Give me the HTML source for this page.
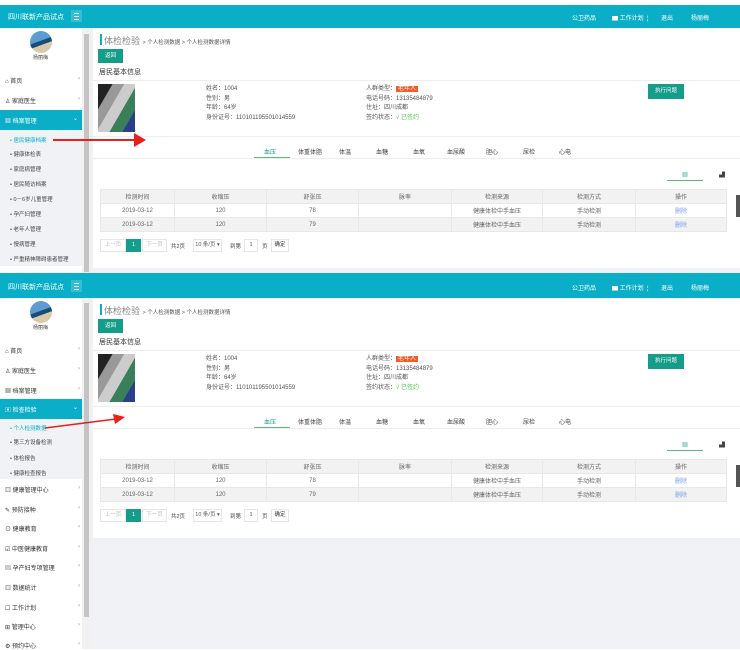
<!DOCTYPE html>
<html><head><meta charset="utf-8">
<style>
*{margin:0;padding:0;box-sizing:border-box}
body{width:740px;height:649px;overflow:hidden;background:#fff;font-family:"Liberation Sans","Noto Sans CJK SC",sans-serif;font-size:7px;color:#444;position:relative}
.a{position:absolute;white-space:nowrap}
.hd{position:absolute;left:0;width:740px;height:23px;background:#0aafc7}
.hd .t{position:absolute;left:8px;top:7px;color:#fff;font-size:7px}
.hd .m{position:absolute;left:71px;top:5px;width:11px;height:12px;background:#2fc0d4}
.hd .m i{position:absolute;left:3px;width:5px;height:1px;background:#fff}
.hd .r{position:absolute;top:8px;color:#fff;font-size:6px}
.sb{position:absolute;left:0;width:82px;background:#fff}
.sbar{position:absolute;left:82px;width:11px;background:#f1f1f1}
.thumb{position:absolute;left:84px;width:5px;background:#c4c4c4}
.mi{position:absolute;left:5px;font-size:6px;color:#333;width:75px}
.mi b{position:absolute;right:0;font-weight:normal;color:#999}
.sub{position:absolute;left:0;width:82px;background:#f0f2f6}
.si{position:absolute;left:10px;font-size:5.5px;color:#444}
.act{position:absolute;left:0;width:82px;height:20px;background:#0aafc7;color:#fff}
.cp{position:absolute;left:93px;width:647px;background:#fff}
.ln{position:absolute;left:93px;width:647px;height:1px;background:#eee}
.btn{position:absolute;background:#159d89;color:#fff;font-size:5.5px;text-align:center}
.tb{position:absolute;left:100px;width:627px;border-collapse:collapse;font-size:6px;color:#666}
.tb td{border:1px solid #e8e8e8;height:14px;text-align:center}
.pg{position:absolute;height:13px;border:1px solid #e6e6e6;font-size:5.5px;color:#bbb;text-align:center;line-height:11px;background:#fff}
.av{position:absolute;left:30px;width:22px;height:22px;border-radius:50%;background:linear-gradient(160deg,#5d9bd0 0 45%,#1a4c7a 46% 60%,#d8c9a8 61%)}
.ph{position:absolute;left:98px;width:37px;height:48px;background:linear-gradient(120deg,#222 0 22%,#999 23% 40%,#ccc 41% 60%,#3a7f5a 61% 80%,#2a3f8a 81%)}
</style></head><body>

<div class="hd" style="top:5px"><div class="t">四川联新产品试点</div><div class="m"><i style="top:3px"></i><i style="top:6px"></i><i style="top:9px"></i></div>
<div class="r" style="left:572px">公卫药品</div><div class="r" style="left:612px">▆ 工作计划 &nbsp;¦</div><div class="r" style="left:661px">退出</div><div class="r" style="left:691px">杨丽梅</div></div>
<div class="sb" style="top:28px;height:246px"></div>
<div class="sbar" style="top:28px;height:246px"></div><div class="thumb" style="top:34px;height:238px"></div>
<div class="av" style="top:31px"></div><div class="a" style="left:33px;top:54px;font-size:5px">杨丽梅</div>
<div class="mi" style="top:76px">⌂ 首页<b>›</b></div>
<div class="mi" style="top:96px">♙ 家庭医生<b>›</b></div>
<div class="act" style="top:110px"><div class="a" style="left:5px;top:6px;font-size:6px">▦ 档案管理</div><div class="a" style="left:73px;top:5px;font-size:6px">⌄</div></div>
<div class="sub" style="top:130px;height:136px"></div>
<div class="si" style="top:136px;color:#0aafc7">• 居民健康档案</div>
<div class="si" style="top:150px">• 健康体检表</div>
<div class="si" style="top:165px">• 家庭病管理</div>
<div class="si" style="top:180px">• 居民随访档案</div>
<div class="si" style="top:195px">• 0－6岁儿童管理</div>
<div class="si" style="top:210px">• 孕产妇管理</div>
<div class="si" style="top:225px">• 老年人管理</div>
<div class="si" style="top:240px">• 慢病管理</div>
<div class="si" style="top:255px">• 严重精神障碍患者管理</div>
<div class="cp" style="top:28px;height:240px"></div>
<div class="a" style="left:93px;top:268px;width:647px;height:6px;background:#f0f2f5"></div>
<div class="a" style="left:0;top:273px;width:740px;height:2px;background:#0aafc7"></div>

<div class="hd" style="top:275px"><div class="t">四川联新产品试点</div><div class="m"><i style="top:3px"></i><i style="top:6px"></i><i style="top:9px"></i></div>
<div class="r" style="left:572px">公卫药品</div><div class="r" style="left:612px">▆ 工作计划 &nbsp;¦</div><div class="r" style="left:661px">退出</div><div class="r" style="left:691px">杨丽梅</div></div>
<div class="sbar" style="top:298px;height:351px"></div><div class="thumb" style="top:303px;height:314px"></div>
<div class="av" style="top:301px"></div><div class="a" style="left:33px;top:324px;font-size:5px">杨丽梅</div>
<div class="mi" style="top:346px">⌂ 首页<b>›</b></div>
<div class="mi" style="top:366px">♙ 家庭医生<b>›</b></div>
<div class="mi" style="top:386px">▦ 档案管理<b>›</b></div>
<div class="act" style="top:399px"><div class="a" style="left:5px;top:6px;font-size:6px">▣ 检查检验</div><div class="a" style="left:73px;top:5px;font-size:6px">⌄</div></div>
<div class="sub" style="top:419px;height:60px"></div>
<div class="si" style="top:424px;color:#0aafc7">• 个人检测数据</div>
<div class="si" style="top:438px">• 第三方设备检测</div>
<div class="si" style="top:454px">• 体检报告</div>
<div class="si" style="top:469px">• 健康检查报告</div>
<div class="mi" style="top:485px">▥ 健康管理中心<b>›</b></div>
<div class="mi" style="top:505px">✎ 预防接种<b>›</b></div>
<div class="mi" style="top:524px">⊙ 健康教育<b>›</b></div>
<div class="mi" style="top:544px">☑ 中医健康教育<b>›</b></div>
<div class="mi" style="top:563px">▤ 孕产妇专项管理<b>›</b></div>
<div class="mi" style="top:583px">▥ 数据统计<b>›</b></div>
<div class="mi" style="top:603px">☐ 工作计划<b>›</b></div>
<div class="mi" style="top:622px">⊞ 管理中心<b>›</b></div>
<div class="mi" style="top:641px">⚙ 预约中心<b>›</b></div>
<div class="a" style="left:93px;top:298px;width:647px;height:351px;background:#f0f2f5"></div>
<div class="cp" style="top:298px;height:240px"></div>

<div style="position:absolute;left:0;top:0;width:740px;height:270px">
<div class="a" style="left:100px;top:34px;width:2px;height:11px;background:#0aafc7"></div>
<div class="a" style="left:104px;top:34px;font-size:9px;color:#888">体检检验 <span style="font-size:5.5px;color:#555">&gt; 个人检测数据 &gt; 个人检测数据详情</span></div>
<div class="btn" style="left:98px;top:49px;width:25px;height:14px;line-height:14px">返回</div>
<div class="a" style="left:99px;top:67px;font-size:7px;color:#333">居民基本信息</div>
<div class="ln" style="top:80px"></div>
<div class="ph" style="top:84px"></div>
<div class="a" style="left:206px;top:85px;font-size:6px;line-height:9.5px;color:#555">姓名：1004<br>性别：男<br>年龄：64岁<br>身份证号：110101195501014559</div>
<div class="a" style="left:366px;top:85px;font-size:6px;line-height:9.5px;color:#555">人群类型：<span style="background:#f25b2a;color:#fff;padding:0 2px">老年人</span><br>电话号码：13135484879<br>住址：四川成都<br>签约状态：<span style="color:#5cc85c">√ 已签约</span></div>
<div class="btn" style="left:648px;top:84px;width:36px;height:15px;line-height:15px">执行问题</div>
<div class="ln" style="top:136px"></div>
<div class="a" style="left:264px;top:147px;font-size:6px;color:#159d89">血压</div>
<div class="a" style="left:254px;top:157px;width:36px;height:1px;background:#5fb878"></div>
<div class="a" style="left:298px;top:147px;font-size:6px">体重体脂</div>
<div class="a" style="left:339px;top:147px;font-size:6px">体温</div>
<div class="a" style="left:376px;top:147px;font-size:6px">血糖</div>
<div class="a" style="left:413px;top:147px;font-size:6px">血氧</div>
<div class="a" style="left:447px;top:147px;font-size:6px">血尿酸</div>
<div class="a" style="left:486px;top:147px;font-size:6px">胆心</div>
<div class="a" style="left:523px;top:147px;font-size:6px">尿检</div>
<div class="a" style="left:559px;top:147px;font-size:6px">心电</div>
<div class="ln" style="top:158px"></div>
<div class="a" style="left:682px;top:170px;font-size:6px;color:#159d89">▦</div>
<div class="a" style="left:719px;top:170px;font-size:6px">▟</div>
<div class="a" style="left:667px;top:180px;width:36px;height:1px;background:#5fb878"></div>
<table class="tb" style="top:189px">
<tr style="background:#f2f2f2"><td style="width:74px">检测时间</td><td style="width:92px">收缩压</td><td style="width:92px">舒张压</td><td style="width:93px">脉率</td><td style="width:91px">检测来源</td><td style="width:93px">检测方式</td><td>操作</td></tr>
<tr><td>2019-03-12</td><td>120</td><td>78</td><td></td><td>健康体检中手血压</td><td>手动检测</td><td style="color:#7a9cf0">删除</td></tr>
<tr style="background:#f2f2f2"><td>2019-03-12</td><td>120</td><td>79</td><td></td><td>健康体检中手血压</td><td>手动检测</td><td style="color:#7a9cf0">删除</td></tr>
</table>
<div class="a" style="left:736px;top:195px;width:4px;height:22px;background:#555"></div>
<div class="pg" style="left:100px;top:239px;width:26px">上一页</div>
<div class="pg" style="left:126px;top:239px;width:15px;background:#159d89;color:#fff;border-color:#159d89">1</div>
<div class="pg" style="left:142px;top:239px;width:25px">下一页</div>
<div class="a" style="left:171px;top:242px;font-size:5.5px">共2页</div>
<div class="pg" style="left:193px;top:239px;width:29px;color:#555">10 条/页 ▾</div>
<div class="a" style="left:230px;top:242px;font-size:5.5px">到第</div>
<div class="pg" style="left:244px;top:239px;width:14px;color:#555">1</div>
<div class="a" style="left:262px;top:242px;font-size:5.5px">页</div>
<div class="pg" style="left:271px;top:239px;width:18px;color:#333">确定</div>
</div>

<div style="position:absolute;left:0;top:270px;width:740px;height:270px">
<div class="a" style="left:100px;top:34px;width:2px;height:11px;background:#0aafc7"></div>
<div class="a" style="left:104px;top:34px;font-size:9px;color:#888">体检检验 <span style="font-size:5.5px;color:#555">&gt; 个人检测数据 &gt; 个人检测数据详情</span></div>
<div class="btn" style="left:98px;top:49px;width:25px;height:14px;line-height:14px">返回</div>
<div class="a" style="left:99px;top:67px;font-size:7px;color:#333">居民基本信息</div>
<div class="ln" style="top:80px"></div>
<div class="ph" style="top:84px"></div>
<div class="a" style="left:206px;top:85px;font-size:6px;line-height:9.5px;color:#555">姓名：1004<br>性别：男<br>年龄：64岁<br>身份证号：110101195501014559</div>
<div class="a" style="left:366px;top:85px;font-size:6px;line-height:9.5px;color:#555">人群类型：<span style="background:#f25b2a;color:#fff;padding:0 2px">老年人</span><br>电话号码：13135484879<br>住址：四川成都<br>签约状态：<span style="color:#5cc85c">√ 已签约</span></div>
<div class="btn" style="left:648px;top:84px;width:36px;height:15px;line-height:15px">执行问题</div>
<div class="ln" style="top:136px"></div>
<div class="a" style="left:264px;top:147px;font-size:6px;color:#159d89">血压</div>
<div class="a" style="left:254px;top:157px;width:36px;height:1px;background:#5fb878"></div>
<div class="a" style="left:298px;top:147px;font-size:6px">体重体脂</div>
<div class="a" style="left:339px;top:147px;font-size:6px">体温</div>
<div class="a" style="left:376px;top:147px;font-size:6px">血糖</div>
<div class="a" style="left:413px;top:147px;font-size:6px">血氧</div>
<div class="a" style="left:447px;top:147px;font-size:6px">血尿酸</div>
<div class="a" style="left:486px;top:147px;font-size:6px">胆心</div>
<div class="a" style="left:523px;top:147px;font-size:6px">尿检</div>
<div class="a" style="left:559px;top:147px;font-size:6px">心电</div>
<div class="ln" style="top:158px"></div>
<div class="a" style="left:682px;top:170px;font-size:6px;color:#159d89">▦</div>
<div class="a" style="left:719px;top:170px;font-size:6px">▟</div>
<div class="a" style="left:667px;top:180px;width:36px;height:1px;background:#5fb878"></div>
<table class="tb" style="top:189px">
<tr style="background:#f2f2f2"><td style="width:74px">检测时间</td><td style="width:92px">收缩压</td><td style="width:92px">舒张压</td><td style="width:93px">脉率</td><td style="width:91px">检测来源</td><td style="width:93px">检测方式</td><td>操作</td></tr>
<tr><td>2019-03-12</td><td>120</td><td>78</td><td></td><td>健康体检中手血压</td><td>手动检测</td><td style="color:#7a9cf0">删除</td></tr>
<tr style="background:#f2f2f2"><td>2019-03-12</td><td>120</td><td>79</td><td></td><td>健康体检中手血压</td><td>手动检测</td><td style="color:#7a9cf0">删除</td></tr>
</table>
<div class="a" style="left:736px;top:195px;width:4px;height:22px;background:#555"></div>
<div class="pg" style="left:100px;top:239px;width:26px">上一页</div>
<div class="pg" style="left:126px;top:239px;width:15px;background:#159d89;color:#fff;border-color:#159d89">1</div>
<div class="pg" style="left:142px;top:239px;width:25px">下一页</div>
<div class="a" style="left:171px;top:242px;font-size:5.5px">共2页</div>
<div class="pg" style="left:193px;top:239px;width:29px;color:#555">10 条/页 ▾</div>
<div class="a" style="left:230px;top:242px;font-size:5.5px">到第</div>
<div class="pg" style="left:244px;top:239px;width:14px;color:#555">1</div>
<div class="a" style="left:262px;top:242px;font-size:5.5px">页</div>
<div class="pg" style="left:271px;top:239px;width:18px;color:#333">确定</div>
</div>

<svg class="a" style="left:0;top:0" width="740" height="649">
<line x1="53" y1="140" x2="136" y2="140" stroke="#e8201c" stroke-width="2"/>
<polygon points="134,133 146,140 134,147" fill="#e8201c"/>
<line x1="45" y1="428" x2="116" y2="419" stroke="#e8201c" stroke-width="1.5"/>
<polygon points="113,414 125,417 115,424" fill="#e8201c"/>
</svg>
</body></html>
